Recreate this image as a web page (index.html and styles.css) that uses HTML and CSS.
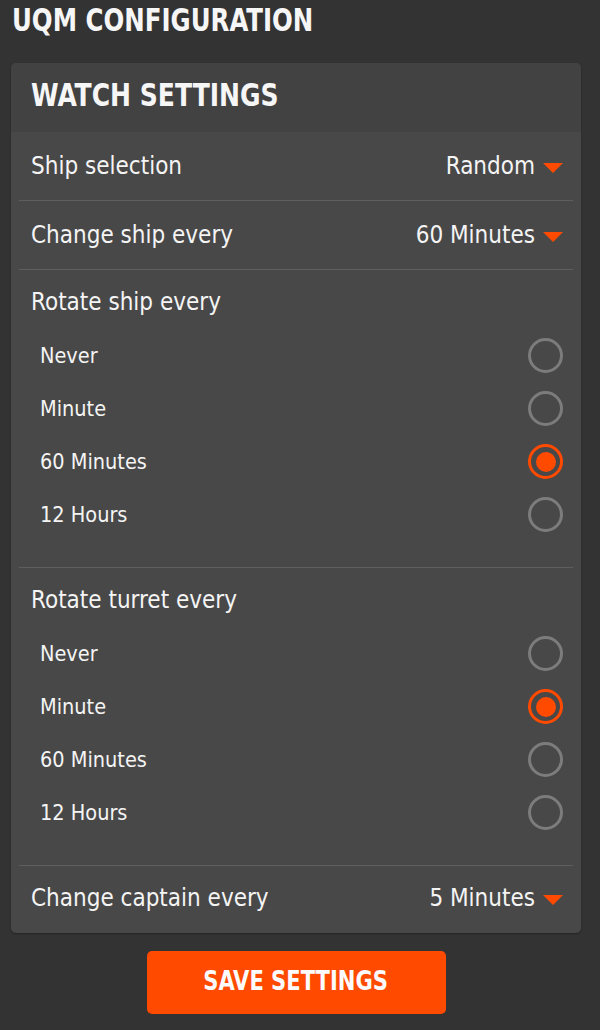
FILE: index.html
```html
<!DOCTYPE html>
<html lang="en">
<head>
<meta charset="utf-8">
<title>UQM Configuration</title>
<link rel="stylesheet" href="styles.css">
</head>
<body>
<div class="page">
  <h1 class="title"><span class="squeeze title-text">UQM CONFIGURATION</span></h1>
  <section class="card">
    <header class="card-head"><h2 class="card-title"><span class="squeeze head-text">WATCH SETTINGS</span></h2></header>
    <div class="card-body">
      <div class="row">
        <span class="label">Ship selection</span>
        <span class="select">Random<i class="caret"></i></span>
      </div>
      <div class="row">
        <span class="label">Change ship every</span>
        <span class="select">60 Minutes<i class="caret"></i></span>
      </div>
      <div class="group">
        <div class="group-label">Rotate ship every</div>
        <ul class="options">
          <li class="option"><span>Never</span><span class="radio"></span></li>
          <li class="option"><span>Minute</span><span class="radio"></span></li>
          <li class="option"><span>60 Minutes</span><span class="radio checked"></span></li>
          <li class="option"><span>12 Hours</span><span class="radio"></span></li>
        </ul>
      </div>
      <div class="group">
        <div class="group-label">Rotate turret every</div>
        <ul class="options">
          <li class="option"><span>Never</span><span class="radio"></span></li>
          <li class="option"><span>Minute</span><span class="radio checked"></span></li>
          <li class="option"><span>60 Minutes</span><span class="radio"></span></li>
          <li class="option"><span>12 Hours</span><span class="radio"></span></li>
        </ul>
      </div>
      <div class="row last">
        <span class="label">Change captain every</span>
        <span class="select">5 Minutes<i class="caret"></i></span>
      </div>
    </div>
  </section>
  <div class="actions">
    <button class="save" type="button"><span class="squeeze btn-text">SAVE SETTINGS</span></button>
  </div>
</div>
</body>
</html>
```
FILE: styles.css
```css
* { box-sizing: border-box; }
html, body { margin: 0; padding: 0; }
body {
  background: #333333;
  color: #f4f4f4;
  font-family: "DejaVu Sans Condensed", "DejaVu Sans", sans-serif;
}
.page {
  padding: 0 19px 0 11px;
}
.squeeze {
  display: inline-block;
  white-space: nowrap;
  font-family: "DejaVu Sans Condensed", "DejaVu Sans", sans-serif;
  font-weight: bold;
}
.title {
  margin: 0;
  padding-left: 1px;
  font-size: 32px;
  line-height: 40px;
  color: #f6f6f6;
}
.title-text {
  transform: scaleX(0.85);
  transform-origin: left center;
}
.card {
  margin-top: 23px;
  border-radius: 5px;
  overflow: hidden;
  background: #484848;
  box-shadow: 0 1px 2px rgba(0,0,0,0.3);
}
.card-head {
  background: #424242;
  height: 69px;
  padding: 0 20px 4px;
}
.card-title {
  margin: 0;
  font-size: 32px;
  line-height: 65px;
  color: #f6f6f6;
}
.head-text {
  transform: scaleX(0.87);
  transform-origin: left center;
}
.card-body {
  padding: 0 8px;
}
.row {
  display: flex;
  align-items: center;
  justify-content: space-between;
  height: 69px;
  padding: 0 10px 0 12px;
  border-bottom: 1px solid #5f5f5f;
  font-size: 24px;
}
.row.last {
  border-bottom: none;
  height: 67px;
  padding-bottom: 4px;
}
.select {
  display: flex;
  align-items: center;
}
.caret {
  width: 0;
  height: 0;
  margin-left: 8px;
  margin-top: 4px;
  border-left: 10px solid transparent;
  border-right: 10px solid transparent;
  border-top: 10px solid #ff4a00;
}
.group {
  padding: 17px 0 26px;
  border-bottom: 1px solid #5f5f5f;
}
.group-label {
  padding-left: 12px;
  font-size: 24px;
  line-height: 30px;
}
.options {
  list-style: none;
  margin: 12px 0 0;
  padding: 0;
}
.option {
  display: flex;
  align-items: center;
  justify-content: space-between;
  height: 53px;
  padding: 0 10px 0 21px;
  font-size: 21.5px;
}
.radio {
  width: 35px;
  height: 35px;
  border-radius: 50%;
  border: 3px solid #7c7c7c;
  display: flex;
  align-items: center;
  justify-content: center;
}
.radio.checked {
  border-color: #ff4a00;
}
.radio.checked::after {
  content: "";
  width: 20px;
  height: 20px;
  border-radius: 50%;
  background: #ff4a00;
}
.actions {
  display: flex;
  justify-content: center;
  padding-top: 18px;
}
.save {
  width: 299px;
  height: 63px;
  border: none;
  border-radius: 5px;
  background: #ff4a00;
  color: #fbfbfb;
  font-size: 26px;
  padding: 0 0 3px;
  cursor: pointer;
  display: flex;
  align-items: center;
  justify-content: center;
}
.btn-text {
  transform: scaleX(0.9);
}
```
